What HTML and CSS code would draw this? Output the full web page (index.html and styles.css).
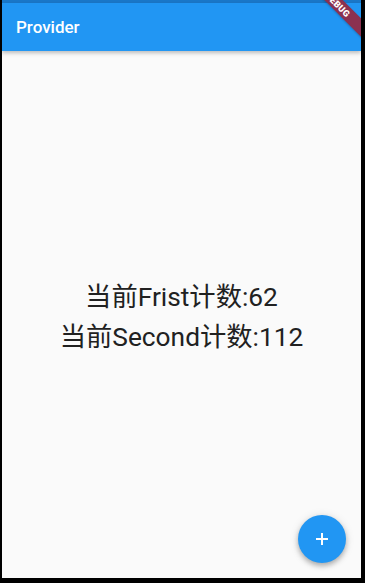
FILE: index.html
```html
<!DOCTYPE html>
<html>
<head>
<meta charset="utf-8">
<link rel="stylesheet" href="styles.css">
</head>
<body>
<div class="device">
  <div class="status"></div>
  <header class="appbar"><span class="title">Provider</span></header>
  <main class="content">
    <div class="line">当前Frist计数:62</div>
    <div class="line">当前Second计数:112</div>
  </main>
  <button class="fab" aria-label="add">
    <svg width="16" height="16" viewBox="0 0 16 16"><path d="M8 2v12M2 8h12" stroke="#fff" stroke-width="2" fill="none"/></svg>
  </button>
  <div class="banner"><span>DEBUG</span></div>
</div>
</body>
</html>
```
FILE: styles.css
```css
html, body {
  margin: 0;
  padding: 0;
  background: #000;
}
body {
  width: 365px;
  height: 583px;
  overflow: hidden;
}
.device {
  position: relative;
  width: 359px;
  height: 578px;
  margin-left: 2px;
  background: #fafafa;
  display: flex;
  flex-direction: column;
  overflow: hidden;
  font-family: Roboto, "Noto Sans CJK SC", sans-serif;
}
.status {
  height: 3px;
  background: #1a78c9;
  flex: none;
}
.appbar {
  height: 48px;
  flex: none;
  background: #2196f3;
  display: flex;
  align-items: center;
  padding-left: 14px;
  box-shadow: 0 2px 4px rgba(0,0,0,0.25);
  position: relative;
  z-index: 1;
}
.title {
  color: #fff;
  font-size: 17px;
  font-weight: 500;
}
.content {
  flex: 1;
  display: flex;
  flex-direction: column;
  align-items: center;
  justify-content: center;
  padding-top: 4px;
}
.line {
  font-size: 26.3px;
  line-height: 40px;
  color: #212121;
}
.fab {
  position: absolute;
  right: 15px;
  bottom: 15px;
  width: 48px;
  height: 48px;
  border-radius: 50%;
  border: none;
  padding: 0;
  background: #2196f3;
  display: flex;
  align-items: center;
  justify-content: center;
  box-shadow: 0 3px 5px rgba(0,0,0,0.25), 0 1px 10px rgba(0,0,0,0.12);
}
.banner {
  position: absolute;
  left: 281px;
  top: 3px;
  width: 120px;
  height: 13px;
  transform: rotate(45deg);
  background: #8b3150;
  z-index: 2;
  display: flex;
  align-items: center;
  justify-content: center;
  box-shadow: 0 1px 2px rgba(0,0,0,0.2);
}
.banner span {
  color: #fff;
  font-family: Roboto, sans-serif;
  font-size: 9px;
  font-weight: 900;
  letter-spacing: 0.3px;
  margin-left: -14px;
}
```
